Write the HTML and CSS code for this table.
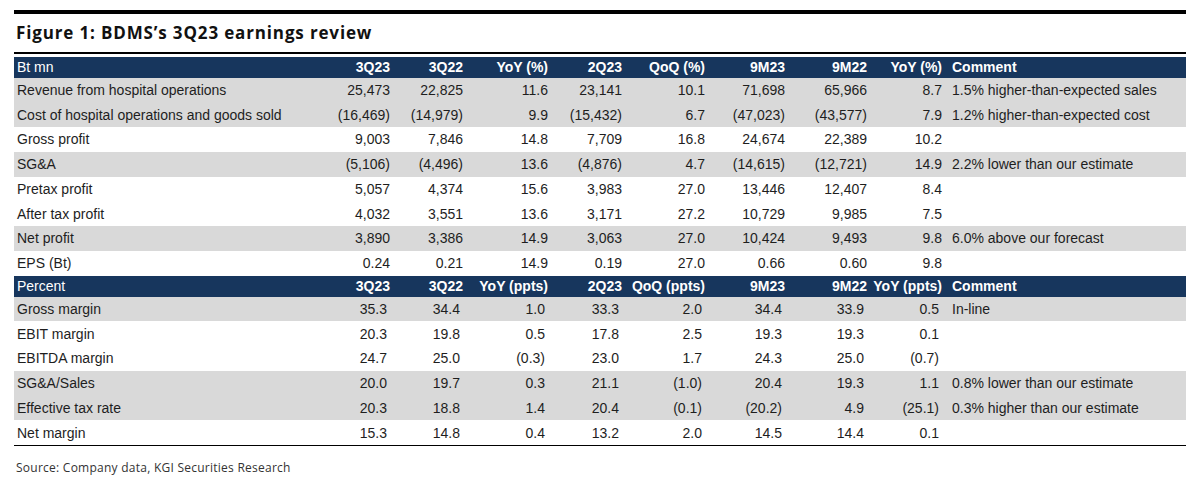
FILE: index.html
```html
<!DOCTYPE html>
<html lang="en">
<head>
<meta charset="utf-8">
<title>BDMS 3Q23 earnings review</title>
<link rel="stylesheet" href="styles.css">
</head>
<body>
<div class="page">
  <div class="rule-thick"></div>
  <h1 class="title">Figure 1: BDMS’s 3Q23 earnings review</h1>
  <div class="rule-thin"></div>
  <div class="table">
    <div class="row head">
      <div class="label plain">Bt mn</div><div class="num">3Q23</div><div class="num">3Q22</div><div class="num">YoY (%)</div><div class="num">2Q23</div><div class="num">QoQ (%)</div><div class="num">9M23</div><div class="num">9M22</div><div class="num">YoY (%)</div><div class="comment">Comment</div>
    </div>
    <div class="row shade">
      <div class="label">Revenue from hospital operations</div><div class="num">25,473</div><div class="num">22,825</div><div class="num">11.6</div><div class="num">23,141</div><div class="num">10.1</div><div class="num">71,698</div><div class="num">65,966</div><div class="num">8.7</div><div class="comment">1.5% higher-than-expected sales</div>
    </div>
    <div class="row shade">
      <div class="label">Cost of hospital operations and goods sold</div><div class="num">(16,469)</div><div class="num">(14,979)</div><div class="num">9.9</div><div class="num">(15,432)</div><div class="num">6.7</div><div class="num">(47,023)</div><div class="num">(43,577)</div><div class="num">7.9</div><div class="comment">1.2% higher-than-expected cost</div>
    </div>
    <div class="row">
      <div class="label">Gross profit</div><div class="num">9,003</div><div class="num">7,846</div><div class="num">14.8</div><div class="num">7,709</div><div class="num">16.8</div><div class="num">24,674</div><div class="num">22,389</div><div class="num">10.2</div><div class="comment"></div>
    </div>
    <div class="row shade">
      <div class="label">SG&amp;A</div><div class="num">(5,106)</div><div class="num">(4,496)</div><div class="num">13.6</div><div class="num">(4,876)</div><div class="num">4.7</div><div class="num">(14,615)</div><div class="num">(12,721)</div><div class="num">14.9</div><div class="comment">2.2% lower than our estimate</div>
    </div>
    <div class="row">
      <div class="label">Pretax profit</div><div class="num">5,057</div><div class="num">4,374</div><div class="num">15.6</div><div class="num">3,983</div><div class="num">27.0</div><div class="num">13,446</div><div class="num">12,407</div><div class="num">8.4</div><div class="comment"></div>
    </div>
    <div class="row">
      <div class="label">After tax profit</div><div class="num">4,032</div><div class="num">3,551</div><div class="num">13.6</div><div class="num">3,171</div><div class="num">27.2</div><div class="num">10,729</div><div class="num">9,985</div><div class="num">7.5</div><div class="comment"></div>
    </div>
    <div class="row shade">
      <div class="label">Net profit</div><div class="num">3,890</div><div class="num">3,386</div><div class="num">14.9</div><div class="num">3,063</div><div class="num">27.0</div><div class="num">10,424</div><div class="num">9,493</div><div class="num">9.8</div><div class="comment">6.0% above our forecast</div>
    </div>
    <div class="row">
      <div class="label">EPS (Bt)</div><div class="num">0.24</div><div class="num">0.21</div><div class="num">14.9</div><div class="num">0.19</div><div class="num">27.0</div><div class="num">0.66</div><div class="num">0.60</div><div class="num">9.8</div><div class="comment"></div>
    </div>
    <div class="row head">
      <div class="label plain">Percent</div><div class="num">3Q23</div><div class="num">3Q22</div><div class="num">YoY (ppts)</div><div class="num">2Q23</div><div class="num">QoQ (ppts)</div><div class="num">9M23</div><div class="num">9M22</div><div class="num">YoY (ppts)</div><div class="comment">Comment</div>
    </div>
    <div class="row shade pct">
      <div class="label">Gross margin</div><div class="num">35.3</div><div class="num">34.4</div><div class="num">1.0</div><div class="num">33.3</div><div class="num">2.0</div><div class="num">34.4</div><div class="num">33.9</div><div class="num">0.5</div><div class="comment">In-line</div>
    </div>
    <div class="row pct">
      <div class="label">EBIT margin</div><div class="num">20.3</div><div class="num">19.8</div><div class="num">0.5</div><div class="num">17.8</div><div class="num">2.5</div><div class="num">19.3</div><div class="num">19.3</div><div class="num">0.1</div><div class="comment"></div>
    </div>
    <div class="row pct">
      <div class="label">EBITDA margin</div><div class="num">24.7</div><div class="num">25.0</div><div class="num">(0.3)</div><div class="num">23.0</div><div class="num">1.7</div><div class="num">24.3</div><div class="num">25.0</div><div class="num">(0.7)</div><div class="comment"></div>
    </div>
    <div class="row shade pct">
      <div class="label">SG&amp;A/Sales</div><div class="num">20.0</div><div class="num">19.7</div><div class="num">0.3</div><div class="num">21.1</div><div class="num">(1.0)</div><div class="num">20.4</div><div class="num">19.3</div><div class="num">1.1</div><div class="comment">0.8% lower than our estimate</div>
    </div>
    <div class="row shade pct">
      <div class="label">Effective tax rate</div><div class="num">20.3</div><div class="num">18.8</div><div class="num">1.4</div><div class="num">20.4</div><div class="num">(0.1)</div><div class="num">(20.2)</div><div class="num">4.9</div><div class="num">(25.1)</div><div class="comment">0.3% higher than our estimate</div>
    </div>
    <div class="row pct">
      <div class="label">Net margin</div><div class="num">15.3</div><div class="num">14.8</div><div class="num">0.4</div><div class="num">13.2</div><div class="num">2.0</div><div class="num">14.5</div><div class="num">14.4</div><div class="num">0.1</div><div class="comment"></div>
    </div>
  </div>
  <p class="source">Source: Company data, KGI Securities Research</p>
</div>
</body>
</html>
```

FILE: styles.css
```css
html, body {
  margin: 0;
  padding: 0;
  background: #ffffff;
}

.page {
  width: 1172px;
  padding: 10px 0 0 14px;
}

.rule-thick {
  height: 4px;
  background: #000000;
}

.title {
  margin: 9px 0 0 2px;
  font-family: "Open Sans", "Liberation Sans", sans-serif;
  font-weight: 700;
  font-size: 17px;
  line-height: 20px;
  color: #111111;
  letter-spacing: 0.85px;
}

.rule-thin {
  margin-top: 9px;
  height: 1.5px;
  background: #000000;
}

.table {
  margin-top: 3px;
  font-family: "Liberation Sans", Arial, sans-serif;
  font-size: 14px;
  color: #1e1e1e;
  border-bottom: 1.5px solid #000000;
}

.row {
  display: grid;
  grid-template-columns: 303px 73px 73px 85px 74px 83px 80px 82px 75px 1fr;
  height: 24.75px;
  align-items: center;
  white-space: nowrap;
}

.row.shade {
  background: #d9d9d9;
}

.row.head {
  height: 21px;
  background: #17365d;
  color: #ffffff;
  font-weight: 700;
}

.label {
  padding-left: 3px;
}

.head .label.plain {
  font-weight: 400;
}

.num {
  text-align: right;
}

.pct .num {
  padding-right: 3px;
}

.comment {
  padding-left: 10px;
}

.source {
  margin: 15px 0 0 2px;
  font-family: "Open Sans", "Liberation Sans", sans-serif;
  font-size: 12px;
  line-height: 14px;
  color: #333333;
  letter-spacing: 0.25px;
}
```
